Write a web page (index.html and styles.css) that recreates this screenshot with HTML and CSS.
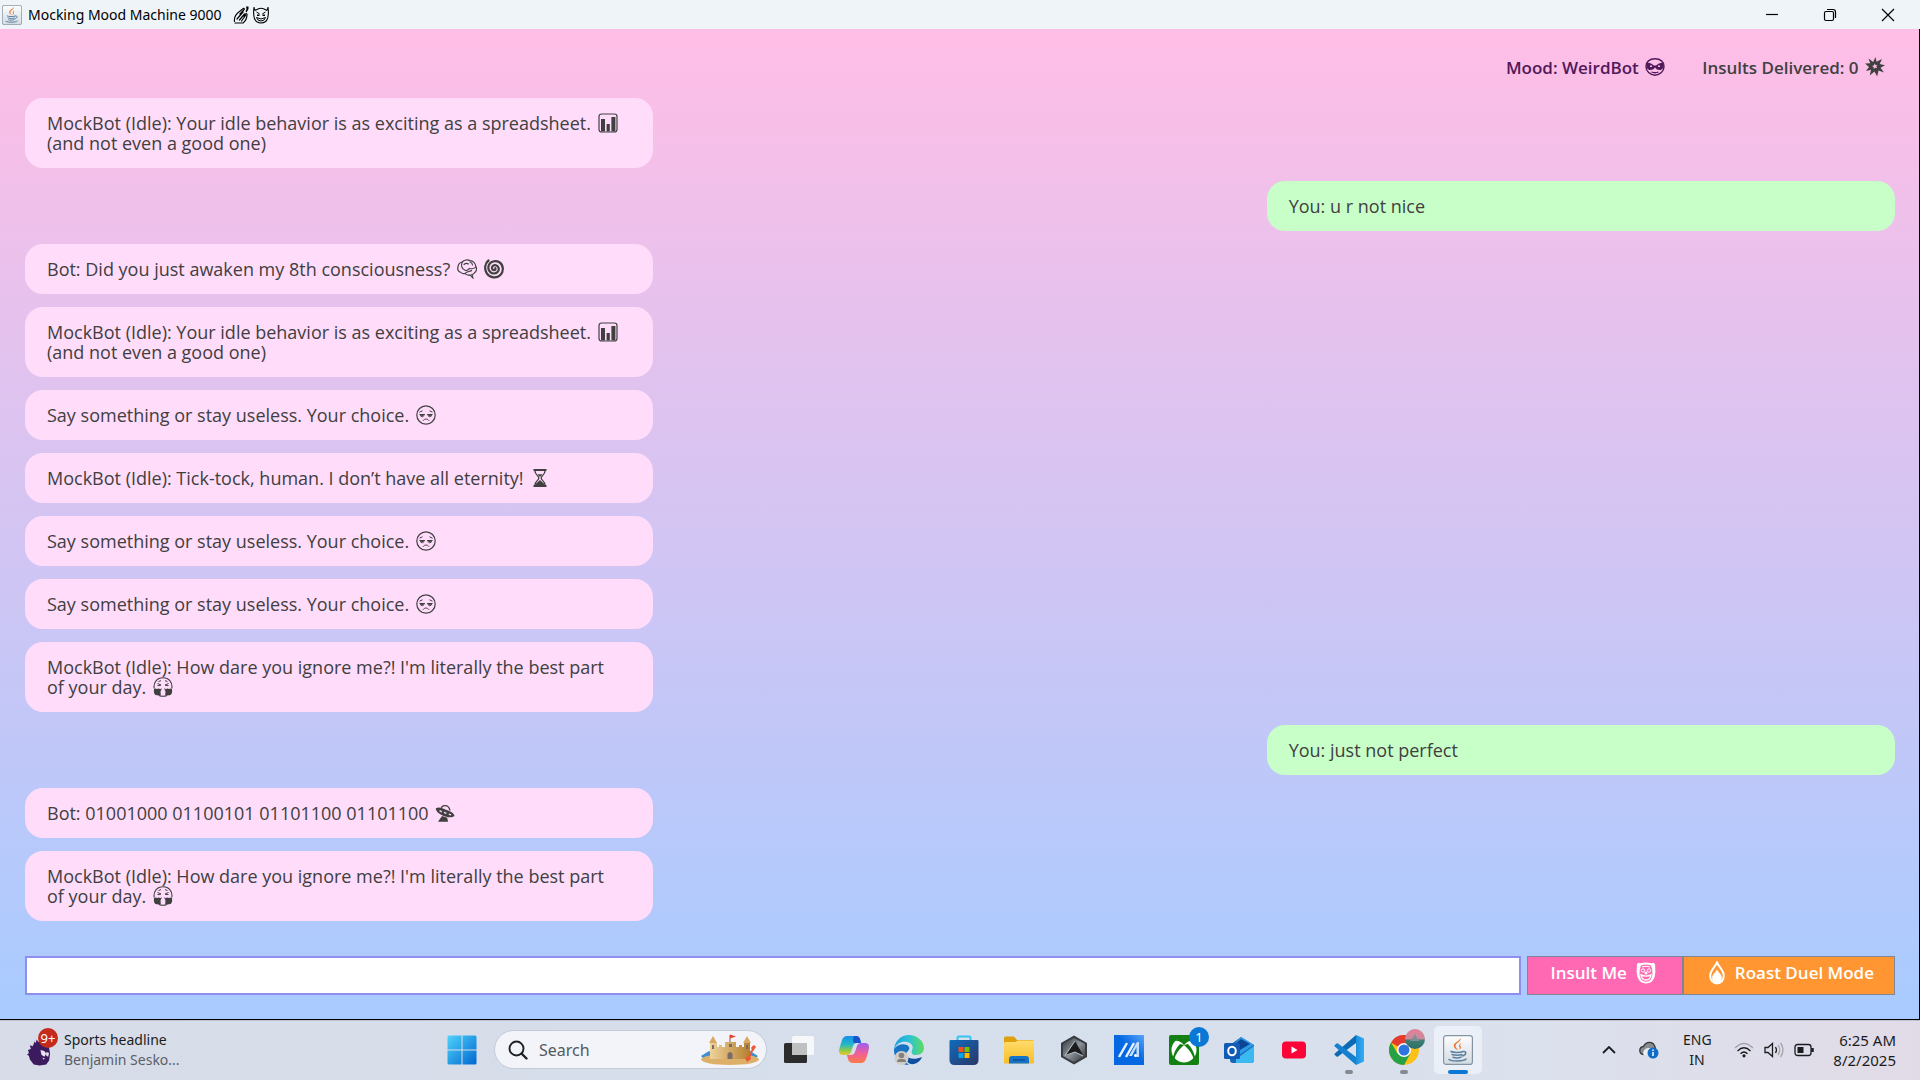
FILE: index.html
```
<!DOCTYPE html>
<html lang="en">
<head>
<meta charset="utf-8">
<title>Mocking Mood Machine 9000</title>
<link rel="stylesheet" href="styles.css">
</head>
<body>
<svg class="defs" aria-hidden="true">
  <defs>
    <linearGradient id="g-win" x1="0" y1="0" x2="1" y2="1"><stop offset="0" stop-color="#4fd3fb"/><stop offset="1" stop-color="#0067cf"/></linearGradient>
    <linearGradient id="g-cop1" x1="0" y1="0" x2="0" y2="1"><stop offset="0" stop-color="#1590e8"/><stop offset=".45" stop-color="#22b8c9"/><stop offset=".75" stop-color="#8ccb4a"/><stop offset="1" stop-color="#f0c52d"/></linearGradient>
    <linearGradient id="g-cop2" x1="0" y1="0" x2="0" y2="1"><stop offset="0" stop-color="#9a5ff0"/><stop offset=".5" stop-color="#ee5f9c"/><stop offset="1" stop-color="#fb7a45"/></linearGradient>
    <linearGradient id="g-edge" x1="0" y1="0" x2="1" y2="0"><stop offset="0" stop-color="#1b9fe0"/><stop offset=".5" stop-color="#2cc3d5"/><stop offset="1" stop-color="#5fdc5c"/></linearGradient>
    <linearGradient id="g-store" x1="0" y1="0" x2="1" y2="1"><stop offset="0" stop-color="#0f6cbd"/><stop offset="1" stop-color="#2b3566"/></linearGradient>
    <linearGradient id="g-fold" x1="0" y1="0" x2="0" y2="1"><stop offset="0" stop-color="#ffdc6b"/><stop offset="1" stop-color="#f9bd26"/></linearGradient>
    <linearGradient id="g-arm" x1="0" y1="0" x2="1" y2="1"><stop offset="0" stop-color="#33383d"/><stop offset=".5" stop-color="#8d959b"/><stop offset="1" stop-color="#2b2e31"/></linearGradient>
    <linearGradient id="g-asus" x1="0" y1="1" x2="1" y2="0"><stop offset=".55" stop-color="#0568e3"/><stop offset="1" stop-color="#58a5fb"/></linearGradient>
    <linearGradient id="g-sand" x1="0" y1="0" x2="1" y2="0"><stop offset="0" stop-color="#eed39b"/><stop offset="1" stop-color="#b5802f"/></linearGradient>
    <linearGradient id="g-java" x1="0" y1="0" x2="0" y2="1"><stop offset="0" stop-color="#fdfdfe"/><stop offset="1" stop-color="#d3dbe2"/></linearGradient>
    <linearGradient id="g-ava" x1="0" y1="0" x2="0" y2="1"><stop offset="0" stop-color="#e37f98"/><stop offset=".5" stop-color="#c98b9c"/><stop offset=".55" stop-color="#3f7f74"/><stop offset="1" stop-color="#2c6d66"/></linearGradient>
    <linearGradient id="g-vs" x1="0" y1="0" x2="1" y2="0"><stop offset="0" stop-color="#1c8fdc"/><stop offset="1" stop-color="#35adf3"/></linearGradient>

    <symbol id="chart" viewBox="0 0 20 20">
      <rect x="1" y="1" width="18" height="18" rx="2.500" fill="none" stroke="currentColor" stroke-width="1.200"/>
      <path d="M3 6h4v12.500H3zM8.600 11h3.200v7.500H8.600zM13.400 4h4v14.500h-4z" fill="currentColor"/>
    </symbol>
    <symbol id="brain" viewBox="0 0 20 20">
      <path d="M4 13.500C1.500 13 .3 10.800.9 8.500 1 5.500 3 3.500 5.200 3 7 .8 10.500.3 13 1.600c3 .2 5.500 2.700 5.700 5.600 1.500 2.200.8 5.300-1.200 6.600-1.200 1.200-2 1.800-2.500 1.700l.8 3.300-2.800-3c-2.500.6-4 0-5-1.300-1.500.3-3.200 0-4-1z" fill="none" stroke="currentColor" stroke-width="1.200"/>
      <path d="M5.200 3C3.800 6.500 4.800 10 8 11.200c2 .8 3.500-.5 4.500-1.800 2.500.8 4.200.4 6-1M7 5.500c1.500-1.500 3-1.500 4.500-.5M13 3c1.500.6 2.500 1.700 2.500 3M8 14.500c2-2.500 5-1.500 6.500-3" fill="none" stroke="currentColor" stroke-width="1.100" stroke-linecap="round"/>
    </symbol>
    <symbol id="swirl" viewBox="0 0 20 20">
      <path d="M4.500 1.500C.8 4.300.1 10.200 2.800 14.400c3 4.700 10 5.300 13.600 1.500 3.600-3.700 3.200-10-1-12.600-4-2.500-9.500-.8-10.700 3.200-1.200 4 1.200 7.800 4.800 8 3.400.2 5.700-2.400 5.200-5.300-.5-2.600-3.400-3.900-5.500-2.500-1.900 1.300-1.500 4.300.6 4.500 1.400.1 2-1 1.500-2" fill="none" stroke="currentColor" stroke-width="2.200" stroke-linecap="round"/>
    </symbol>
    <symbol id="unamused" viewBox="0 0 20 20">
      <circle cx="10" cy="10" r="9.200" fill="none" stroke="currentColor" stroke-width="1.200"/>
      <path d="M3.500 7.200 6.500 5.800M16.500 7.200l-3-1.400M3.500 9.500h5.300M11.200 9.500h5.300M7 15.700c1.500-2.200 4.500-2.200 6 0" fill="none" stroke="currentColor" stroke-width="1"/>
      <path d="M4.200 9.500q.2 2.300 2 2.300t2-2.300zM11.800 9.500q.2 2.300 2 2.300t2-2.300z" fill="none" stroke="currentColor" stroke-width=".9"/>
      <path d="M5.200 9.500h2v1.500h-2zM12.800 9.500h2v1.500h-2z" fill="currentColor"/>
    </symbol>
    <symbol id="hourglass" viewBox="0 0 20 20">
      <path d="M3.500 1h13v2h-13zM3.500 17h13v2h-13z" fill="currentColor"/>
      <path d="M5 3c0 4 3.800 4.500 3.800 7S5 13 5 17M15 3c0 4-3.800 4.500-3.800 7S15 13 15 17" fill="none" stroke="currentColor" stroke-width="1.300"/>
      <path d="M7.500 6.200h5L10 9zM5.500 17c.3-2.300 3-3 4.500-5 1.500 2 4.200 2.700 4.500 5z" fill="currentColor"/>
    </symbol>
    <symbol id="steam" viewBox="0 0 20 20">
      <path d="M1.200 11.500C.2 5.500 4 .8 10 .8s9.800 4.700 8.800 10.700M6 18.400q4 1.600 8 0" fill="none" stroke="currentColor" stroke-width="1.100"/>
      <path d="M5.500 4.600 8 3.600M14.500 4.600 12 3.600M4.500 6.500 8 8q-2 1-3.500.5M15.500 6.500 12 8q2 1 3.500.5" fill="none" stroke="currentColor" stroke-width="1"/>
      <path d="M1 12q1.500-1.200 3 0 1.800-1 3.300.2L8.500 11v1.500l-1 2 .3 3.300q-1.600 1.400-3.300.4-2 .3-3-1.200-1-2.500-.5-5zM19 12q-1.500-1.200-3 0-1.800-1-3.300.2L11.500 11v1.500l1 2-.3 3.300q1.600 1.400 3.300.4 2 .3 3-1.200 1-2.500.5-5z" fill="currentColor"/>
    </symbol>
    <symbol id="ufo" viewBox="0 0 20 20">
      <path d="M6 6.500C6.500 1.500 13.500.8 15 7.500" fill="none" stroke="currentColor" stroke-width="1.300"/>
      <path d="M.8 5.200C4 3.800 7 5 11.500 7c4.500 1.600 7.500 3 8 6-3 2.300-8 1.200-12-.6C3.800 10.700 1 8.700.8 5.200z" fill="currentColor"/>
      <path d="M4.500 7.600l2.400 1.200M9 9.300l2.400 1M13.800 11.200l2.300.6" stroke="#ffdcfa" stroke-width="1.300"/>
      <path d="M7 13l5.300 1.700.7 4H3z" fill="currentColor"/>
    </symbol>
    <symbol id="alien" viewBox="0 0 20 18">
      <path d="M10 .8C4.500.8 1 3.800 1 8.500c0 4.700 4 8.700 9 8.700s9-4 9-8.700C19 3.800 15.500.8 10 .8z" fill="none" stroke="currentColor" stroke-width="1.400"/>
      <path d="M1.500 5q4-.8 7.500 2.500h2Q14.500 4.200 18.500 5q.8 5.500-2.700 7-4 .5-5.800-2.500-1.800 3-5.800 2.500Q.7 10.500 1.500 5z" fill="currentColor"/>
      <path d="M6.500 14q3.500 1.500 7 0" fill="none" stroke="currentColor" stroke-width="1.300"/>
      <path d="M5 8.300h2M13 8.300h2" stroke="#fbbde6" stroke-width="1.500"/>
    </symbol>
    <symbol id="burst" viewBox="0 0 20 20">
      <path d="M3.500 1.500l4.700 3.500L10.500 0l1 4.700L17 2l-2.300 5 5.300 1.300-4.500 2.500 3.500 4.700-5.500-2-1.300 6-2.700-5-4.800 4 1.400-5.700L1 14l3-4-4-3.500 5.200-.2z" fill="currentColor"/>
      <path d="M9.800 6.500l.8 1.700 1.900-.2-1.200 1.500.8 1.700-1.900-.5-1.500 1.200v-1.900L7 9l1.800-.6z" fill="#fbbde6"/>
    </symbol>
    <symbol id="clown" viewBox="0 0 20 22">
      <path fill-rule="evenodd" d="M2 .8q2 .6 3.500.2 4.500-1 9 0 1.500.4 3.500-.2 1.800 2 1.200 5.200.6 4-.5 8.500Q16.500 21.500 10 21.500T1.300 14.500Q.2 10 .8 6 .2 2.800 2 .8zM5 3.500Q3.200 7 3.500 12q.8 7.800 6.500 7.800T16.500 12q.3-5-1.500-8.500-5-1.800-10 0z" fill="currentColor"/>
      <path d="M6 5q4-1.500 8 0" fill="none" stroke="currentColor" stroke-width="1.200"/>
      <circle cx="7" cy="8.500" r="1.700" fill="none" stroke="currentColor"/>
      <circle cx="13" cy="8.500" r="1.700" fill="none" stroke="currentColor"/>
      <circle cx="10" cy="11" r="1.500" fill="currentColor"/>
      <path d="M5 13q5 2.200 10 0-.8 5-5 5t-5-5z" fill="none" stroke="currentColor" stroke-width="1.400"/>
    </symbol>
    <symbol id="flame" viewBox="0 0 18 24">
      <path d="M9 1.500c2 4.500 6.800 8 6.800 13.300 0 4.700-3 7.700-6.800 7.700s-6.800-3-6.800-7.700C2.200 9.500 7 6 9 1.500z" fill="none" stroke="currentColor" stroke-width="2"/>
      <path d="M9 8.500c1.200 3 4.900 4.700 4.900 8.500 0 3-2.200 5-4.900 5s-4.900-2-4.900-5c0-3.800 3.700-5.500 4.900-8.500z" fill="currentColor"/>
    </symbol>
    <symbol id="polish" viewBox="0 0 16 18">
      <path d="M1.500 15.500C.8 11 3 8 6.500 5.500l4-3.200c1 .1 1 1 .3 1.700L7 8M2 17h8c2.500-2 4-5.500 4-8.500 0-1-1.500-1.200-2 .3l-1 2.200M4 13l6-7M6.500 14l5-6M8.500 15l4-5.500" fill="none" stroke="currentColor" stroke-width="1.200" stroke-linecap="round"/>
      <path d="M13 .5h2.500v2.500l-2 3.500-1-1 1-2.500z" fill="currentColor"/>
    </symbol>
    <symbol id="imp" viewBox="0 0 16 18">
      <path d="M1 1c0 2 .5 3 2 3.500M15 1c0 2-.5 3-2 3.500M1 1.500C.3 6 .5 9 1.300 12c1 3.300 3.700 5 6.700 5s5.700-1.700 6.700-5c.8-3 1-6 .3-10.500M3 4Q8 .5 13 4" fill="none" stroke="currentColor" stroke-width="1.100"/>
      <path d="M3.500 6l3.200 2M12.500 6 9.300 8M3.500 11.500q4.500 3 9 0-1 3.500-4.500 3.500t-4.500-3.500" fill="none" stroke="currentColor" stroke-width="1"/>
      <path d="M4 8.500h2.500V10H4zM9.500 8.500H12V10H9.500z" fill="currentColor"/>
    </symbol>
    <symbol id="java" viewBox="0 0 30 30">
      <rect x=".6" y=".6" width="28.800" height="28.800" rx="2.500" fill="url(#g-java)" stroke="#8494a3" stroke-width="1.200"/>
      <path d="M17.500 3c1.500 3.500-5.500 5-5 8.200.2 1.600 1.700 2.700 2.500 4-3-1.400-5-3.200-4-5.700 1-2.300 5.800-3.500 6.500-6.500zM19 8c-2.500 1-3.500 2.200-2.700 3.700.6 1.100.7 2-.5 3.300 3.300-2 2-3.300 1.500-4.300C17 9.800 17.500 9 19 8z" fill="#e7732c"/>
      <path d="M8 16.500c2 1.200 9 1.200 11.500.2M9 19.500c2.500 1 7.500 1 9.800 0M10 22.300c2 .7 5.700.7 7.800 0M19.800 16.500c4-.7 4 3-.5 4.500M6 24.500c3 2 14.500 2 17-.5" fill="none" stroke="#5b7f9d" stroke-width="1.500" stroke-linecap="round"/>
    </symbol>
  </defs>
</svg>

<header class="titlebar">
  <svg class="titlebar-logo"><use href="#java"/></svg>
  <h1 class="titlebar-text">Mocking Mood Machine 9000</h1>
  <svg class="titlebar-emoji"><use href="#polish"/></svg>
  <svg class="titlebar-emoji"><use href="#imp"/></svg>
  <div class="window-controls">
    <button class="window-button" aria-label="Minimize"><svg viewBox="0 0 14 14"><path d="M1 6.500h12"/></svg></button>
    <button class="window-button" aria-label="Restore"><svg viewBox="0 0 14 14"><rect x="1.500" y="3.500" width="9" height="9" rx="1.500"/><path d="M4 1.500h6q2.500 0 2.500 2.500v6"/></svg></button>
    <button class="window-button" aria-label="Close"><svg viewBox="0 0 14 14"><path d="M1 1l12 12M13 1 1 13"/></svg></button>
  </div>
</header>

<main class="app">
  <div class="status">
    <p class="status-mood">Mood: WeirdBot <svg class="emoji"><use href="#alien"/></svg></p>
    <p class="status-count">Insults Delivered: 0 <svg class="emoji"><use href="#burst"/></svg></p>
  </div>

  <ul class="chat">
    <li class="bubble">MockBot (Idle): Your idle behavior is as exciting as a spreadsheet. <svg class="emoji"><use href="#chart"/></svg><br>(and not even a good one)</li>
    <li class="bubble bubble-user">You: u r not nice</li>
    <li class="bubble">Bot: Did you just awaken my 8th consciousness? <svg class="emoji"><use href="#brain"/></svg> <svg class="emoji"><use href="#swirl"/></svg></li>
    <li class="bubble">MockBot (Idle): Your idle behavior is as exciting as a spreadsheet. <svg class="emoji"><use href="#chart"/></svg><br>(and not even a good one)</li>
    <li class="bubble">Say something or stay useless. Your choice. <svg class="emoji"><use href="#unamused"/></svg></li>
    <li class="bubble">MockBot (Idle): Tick-tock, human. I don’t have all eternity! <svg class="emoji"><use href="#hourglass"/></svg></li>
    <li class="bubble">Say something or stay useless. Your choice. <svg class="emoji"><use href="#unamused"/></svg></li>
    <li class="bubble">Say something or stay useless. Your choice. <svg class="emoji"><use href="#unamused"/></svg></li>
    <li class="bubble">MockBot (Idle): How dare you ignore me?! I'm literally the best part<br>of your day. <svg class="emoji"><use href="#steam"/></svg></li>
    <li class="bubble bubble-user">You: just not perfect</li>
    <li class="bubble">Bot: 01001000 01100101 01101100 01101100 <svg class="emoji"><use href="#ufo"/></svg></li>
    <li class="bubble">MockBot (Idle): How dare you ignore me?! I'm literally the best part<br>of your day. <svg class="emoji"><use href="#steam"/></svg></li>
  </ul>

  <form class="composer">
    <input class="composer-input" type="text" aria-label="Message">
    <button class="composer-button insult" type="button">Insult Me <svg class="clown"><use href="#clown"/></svg></button><button class="composer-button duel" type="button"><svg class="flame"><use href="#flame"/></svg> Roast Duel Mode</button>
  </form>
</main>

<footer class="taskbar">
  <a class="widget" href="#">
    <span class="widget-icon">
      <svg viewBox="0 0 26 32"><path d="M8 7l1 2 1-4 2 3 3-4 1 4 5 1 2 5 1 6-1 7-3 4-7 1-6-1-4-5-1-4-2-1 2-2-1-3 3-1-1-4 3 1z" fill="#3b1a5e"/><path d="M14 16l4 1 2 3-2 3-3-2zM20 18l3 1-1 4-2-1zM16 24l3 1-2 1z" fill="#e9e4f3"/></svg>
      <span class="badge">9+</span>
    </span>
    <span class="widget-text"><span>Sports headline</span><span class="widget-sub">Benjamin Sesko...</span></span>
  </a>

  <nav class="apps" aria-label="Taskbar">
    <button class="app-button" aria-label="Start"><svg class="icon" viewBox="0 0 30 30"><path d="M2 .5h12.500v14H.5V2Q.5.500 2 .5zM15.500.5H28q1.500 0 1.500 1.500v12.500h-14zM.5 15.500h14v14H2Q.5 29.500.5 28zM15.500 15.500h14V28q0 1.500-1.500 1.500H15.500z" fill="url(#g-win)"/></svg></button>
    <label class="search">
      <svg class="search-icon" viewBox="0 0 20 20"><circle cx="8.500" cy="8.500" r="7" fill="none" stroke="#1d2226" stroke-width="1.900"/><path d="M13.500 13.500l5 5" stroke="#1d2226" stroke-width="2.400" stroke-linecap="round"/></svg>
      <input class="search-input" type="text" placeholder="Search" aria-label="Search">
      <svg class="castle" viewBox="0 0 60 32">
        <path d="M1 22l8-5 5 3 30 1 6-4 8 5-3 3H4z" fill="#3c8fd0"/>
        <ellipse cx="30" cy="25.500" rx="29" ry="5.500" fill="#dcb068"/>
        <path d="M10 9h7v4h2v-2h3v2h3V8h11v5h3v-2h3v2h2V9h6v16H10z" fill="url(#g-sand)"/>
        <path d="M9 9l4-7 4 7zM43 9l4-7 4 7z" fill="#d9a860"/>
        <path d="M12 11h2v4h-2zM46 11h2v4h-2zM27.500 25v-5q2.500-4 5 0v5zM29 10h3v3h-3z" fill="#7d6a6a"/>
        <path d="M30 8V1" stroke="#8a5a35"/><path d="M30 .5l6 2-6 2z" fill="#e8432b"/>
        <path d="M54 13l-6 12" stroke="#ee5533" stroke-width="1.800"/><path d="M51 14q3-5 5-1l-3 4zM45 24l5-2 1 3-4 3z" fill="#ee5533"/>
      </svg>
    </label>
    <button class="app-button" aria-label="Task view"><svg class="icon" viewBox="0 0 30 30"><rect x="0" y="8" width="23" height="20" rx="1.500" fill="#2c2c2c"/><rect x="8" y="1" width="22" height="19" rx="1.500" fill="#f8f8f8" opacity=".92"/><path d="M8 8h15v12H8z" fill="#bfc0c0"/></svg></button>
    <button class="app-button" aria-label="Copilot"><svg class="icon" viewBox="0 0 30 30"><path d="M8 1h9q3 0 4 3l1 4h-4q-3 0-4 3l-2 6q-1 3-4 3H4q-4 0-4-4Q0 14 3 5 4.500 1 8 1z" fill="url(#g-cop1)"/><path d="M15 1h2q3 0 4 3l1 4h-7q-2-3 0-7z" fill="#1b52cf"/><path d="M22 28h-8q-4 0-5-4l-1-4h4q3 0 4-3l2-6q1-3 4-3h4q4 0 4 4 0 3-3 12-1.500 4-5 4z" fill="url(#g-cop2)"/></svg></button>
    <button class="app-button" aria-label="Edge"><svg class="icon" viewBox="0 0 30 30"><path d="M15 0C7 0 1 6 0 14c3-6 8-8 13-7 5 1 7 5 5 8-1 3 0 5 4 5 5 0 8-3 8-7C30 6 23 0 15 0z" fill="url(#g-edge)"/><path d="M0 14c-.5 9 6 16 15 16-5-3-6-10-1-14 2-2 2-4-1-6-5-2-10 0-13 4z" fill="#1773c4"/><path d="M11 20c0 6 4 10 9 9 4-1 7-4 8-7-7 3-14 2-17-2z" fill="#0e4fa0"/><circle cx="7.500" cy="23" r="7" fill="#d2cdc8"/><circle cx="7.500" cy="20.500" r="2.800" fill="#84807c"/><path d="M3 27q0-3 3-3h3q3 0 3 3z" fill="#84807c"/></svg></button>
    <button class="app-button" aria-label="Microsoft Store"><svg class="icon" viewBox="0 0 30 30"><path d="M8.500 6V3q0-1.500 1.500-1.500h10q1.500 0 1.500 1.500v3" fill="none" stroke="#35c3f3" stroke-width="2"/><path d="M1.500 5h27q1 0 1 1v19q0 5-5 5h-19q-5 0-5-5V6q0-1 1-1z" fill="url(#g-store)"/><path d="M9.500 12h5v5h-5z" fill="#f25022"/><path d="M15.500 12h5v5h-5z" fill="#7fba00"/><path d="M9.500 18h5v5h-5z" fill="#00a4ef"/><path d="M15.500 18h5v5h-5z" fill="#ffb900"/></svg></button>
    <button class="app-button" aria-label="File Explorer"><svg class="icon" viewBox="0 0 30 30"><path d="M0 3q0-1.500 1.500-1.500H10L13 5h15.500Q30 5 30 6.500V12H0z" fill="#dfa00f"/><path d="M0 8.500Q0 7 1.500 7H11l3-1.500h16v22q0 1-1 1H1q-1 0-1-1z" fill="url(#g-fold)"/><path d="M5 28.500V24q0-3 3-3h14q3 0 3 3v4.500z" fill="#1474cc"/><path d="M9 25h12" stroke="#0d4f92" stroke-width="1.500"/></svg></button>
    <button class="app-button" aria-label="Armoury Crate"><svg class="icon" viewBox="0 0 30 30"><path d="M15 .5 28 8v14l-13 7.500L2 22V8z" fill="#383c40"/><path d="M15 3 26 9v12l-11 6-11-6V9z" fill="url(#g-arm)"/><path d="M16 6 24 20l-8-3-10 4z" fill="#1a1c1e"/><path d="M16 6 6 20.500 16 17l8 4" fill="none" stroke="#b9c1c7"/></svg></button>
    <button class="app-button" aria-label="MyASUS"><svg class="icon" viewBox="0 0 30 30"><path d="M0 0h30v30H0z" fill="url(#g-asus)"/><path d="M5 22 13 8M12 22 20 8" stroke="#e6f1ff" stroke-width="2.500"/><path d="M15 21 23 7h2v15h-2.500V12l-4.500 9z" fill="#c4defc"/><circle cx="21.500" cy="20.500" r="1.500" fill="#fff"/></svg></button>
    <button class="app-button" aria-label="Xbox"><svg class="icon" viewBox="0 0 30 30"><rect width="30" height="30" rx="2" fill="#128012"/><circle cx="15" cy="15" r="12.500" fill="#fff"/><path d="M6 6q4-1 9 4 5-5 9-4-3-4-9-4T6 6zM15 10q-8 7-9.500 14L4 22q2-8 7-13zM15 10q8 7 9.500 14l1.500-2q-2-8-7-13z" fill="#128012"/></svg><span class="badge badge-blue">1</span></button>
    <button class="app-button" aria-label="Outlook"><svg class="icon" viewBox="0 0 30 30"><path d="M6 10 17 2l13 8v15q0 3-3 3H9q-3 0-3-3z" fill="#1a66b8"/><path d="M11 8 17 2l13 8-18 12z" fill="#2f9be8"/><path d="M17 4l9 5-15 9V9z" fill="#0d4596"/><path d="M12 24 30 11v14q0 3-3 3H12z" fill="#3bb9f0"/><rect y="8" width="16" height="16" rx="1.500" fill="#0f5bb5"/><ellipse cx="8" cy="16" rx="3.800" ry="4.300" fill="none" stroke="#fff" stroke-width="2"/></svg></button>
    <button class="app-button" aria-label="YouTube"><svg class="icon" viewBox="0 0 30 30"><rect x="3" y="6.500" width="24" height="17" rx="4" fill="#fb0437"/><path d="M12.500 11.500v7l6-3.500z" fill="#fff"/></svg></button>
    <button class="app-button running" aria-label="Visual Studio Code"><svg class="icon" viewBox="0 0 30 30"><path d="M22 0v8L4 21.500q-.8.500-1.500 0L.8 20q-.8-.8 0-1.600z" fill="#0b6bb5"/><path d="M22 30v-8L4 8.500q-.8-.5-1.500 0L.8 10q-.8.8 0 1.600z" fill="#1580cf"/><path d="M22 0 30 3.500v23L22 30z" fill="url(#g-vs)"/></svg></button>
    <button class="app-button running" aria-label="Chrome"><svg class="icon" viewBox="0 0 30 30"><circle cx="15" cy="15" r="15" fill="#fbc116"/><path d="M15 15 2 7.500A15 15 0 0 1 28 7.500z" fill="#e33b2e"/><path d="M2 7.500A15 15 0 0 0 15 30l6.500-11.500H8.500z" fill="#28a046"/><circle cx="15" cy="15" r="7" fill="#fff"/><circle cx="15" cy="15" r="5.500" fill="#2f73e0"/></svg><svg class="avatar" viewBox="0 0 20 20"><circle cx="10" cy="10" r="10" fill="url(#g-ava)"/><path d="M5 12l4-5 1-2 2 4 3 3z" fill="#7d8f95"/></svg></button>
    <button class="app-button running active" aria-label="Java"><svg class="icon"><use href="#java"/></svg></button>
  </nav>

  <div class="tray">
    <svg class="chevron" viewBox="0 0 14 8"><path d="M1 7l6-6 6 6"/></svg>
    <svg class="cloud" viewBox="0 0 20 18"><path d="M4.500 13.500Q.8 13 .8 9.500.8 6 4.500 5.500 6.500 1 11 1.300q4 .5 5 4.700l1 4" fill="#8a8d90" stroke="#33373a" stroke-width="1.300"/><path d="M4 12q1-5 6-5t7 4l-4 3H5z" fill="#eceef0"/><circle cx="14" cy="12" r="5.500" fill="#0f6cc9"/><path d="M14 11v4M14 8.500v1.500" stroke="#fff" stroke-width="1.500"/></svg>
    <p class="language">ENG<br>IN</p>
    <div class="status-icons">
      <svg viewBox="0 0 20 16"><path d="M1 6q9-9 18 0" opacity=".3"/><path d="M3.500 9q6.500-6.500 13 0M6.500 11.800q3.500-3.500 7 0"/><circle cx="10" cy="13.800" r="1.600" fill="#1a1d20" stroke="none"/></svg>
      <svg viewBox="0 0 20 16"><path d="M1 5.500h3L8.500 1.500v13L4 10.500H1zM11.500 5q2 3 0 6"/><path d="M14 3q3.500 5 0 10M16.500 1q5 7 0 14" opacity=".3"/></svg>
      <svg viewBox="0 0 20 16"><rect x="1" y="2.500" width="16" height="11" rx="2.500"/><path d="M3.500 5h6v6h-6z" fill="#1a1d20" stroke="none"/><path d="M18.500 6v4" stroke-width="2.500"/></svg>
    </div>
    <p class="clock">6:25 AM<br>8/2/2025</p>
  </div>
</footer>
</body>
</html>
```
FILE: styles.css
```
* { box-sizing: border-box; }

body {
  margin: 0;
  min-height: 100vh;
  display: flex;
  flex-direction: column;
  font-family: "Open Sans", "Noto Sans", sans-serif;
  color: #404040;
}

h1, p, ul { margin: 0; padding: 0; }
button { font: inherit; padding: 0; border: 0; background: none; }
svg { flex: none; }

.defs { position: absolute; width: 0; height: 0; }

/* Title bar */
.titlebar {
  display: flex;
  align-items: center;
  height: 29px;
  padding-left: 2px;
  background: #eff4f9;
  color: #000;
}
.titlebar-logo { width: 20px; height: 20px; margin-right: 6px; }
.titlebar-text { margin-right: 11px; font: 400 14px/20px "Noto Sans", sans-serif; }
.titlebar-emoji { width: 16px; height: 18px; margin-right: 4px; }
.window-controls { display: flex; margin-left: auto; padding-right: 3px; }
.window-button { display: grid; place-items: center; width: 58px; height: 29px; }
.window-button svg { width: 14px; height: 14px; fill: none; stroke: #000; stroke-width: 1.2; }

/* Application window */
.app {
  flex: 1;
  display: flex;
  flex-direction: column;
  padding: 0 24px 24px 25px;
  border-right: 1px solid #000;
  border-bottom: 1px solid #000;
  background: linear-gradient(#ffbee6, #a8cbff);
}

.emoji { width: 20px; height: 20px; margin-left: 2px; vertical-align: -3px; }

.status {
  display: flex;
  justify-content: flex-end;
  gap: 37px;
  padding: 27px 10px 18px 0;
  font-size: 17px;
  font-weight: 600;
  line-height: 24px;
}
.status-mood { color: #50195a; }

.chat { display: flex; flex-direction: column; gap: 13px; list-style: none; }
.bubble {
  width: 33.6%;
  padding: 15px 22px;
  border-radius: 18px;
  background: #ffdcfa;
  font-size: 18px;
  line-height: 20px;
  white-space: nowrap;
}
.bubble-user { align-self: flex-end; background: #c8ffc8; }

.composer { display: flex; height: 39px; margin-top: auto; }
.composer-input {
  flex: 1;
  min-width: 0;
  margin-right: 6px;
  padding: 0 8px;
  border: 2px solid #8e8ef0;
  background: #fff;
  font: inherit;
  font-size: 18px;
  outline: 0;
}
.composer-button {
  display: flex;
  align-items: center;
  gap: 9px;
  padding-bottom: 6px;
  border: 1px solid #7f8795;
  color: #fff;
  font-size: 17px;
  font-weight: 600;
}
.insult { padding-left: 22px; padding-right: 26px; background: #ff69b4; }
.duel { padding-left: 24px; padding-right: 20px; background: #ff9632; }
.clown { width: 20px; height: 22px; }
.flame { width: 18px; height: 24px; }

/* Taskbar */
.taskbar {
  display: grid;
  grid-template-columns: 1fr auto 1fr;
  align-items: center;
  height: 60px;
  padding-bottom: 2px;
  border-top: 1px solid #bfc3cd;
  background: linear-gradient(90deg, #d7dce8, #d6dfec 55%, #dbe1ed 80%, #e1dbe7);
  color: #1a1d20;
  font-family: "Noto Sans", sans-serif;
  font-size: 14px;
  line-height: 20px;
}

.widget { display: flex; align-items: center; gap: 12px; padding-left: 27px; color: inherit; text-decoration: none; }
.widget-icon { position: relative; display: flex; }
.widget-icon svg { width: 25px; height: 32px; }
.widget-text { display: flex; flex-direction: column; }
.widget-sub { color: #5b5f66; }

.badge {
  position: absolute;
  top: -6px;
  left: 11px;
  width: 20px;
  height: 20px;
  border-radius: 10px;
  background: #c42b1c;
  color: #fff;
  font-size: 13px;
  text-align: center;
}
.badge-blue { top: 1px; left: 33px; background: #0a78d4; }

.apps { display: flex; align-items: center; }
.app-button { position: relative; display: grid; place-items: center; width: 55px; height: 48px; }
.icon { width: 30px; height: 30px; }
.avatar { position: absolute; top: 3px; left: 29px; width: 20px; height: 20px; }
.running::after {
  content: "";
  position: absolute;
  bottom: 0;
  left: 24px;
  width: 8px;
  height: 4px;
  border-radius: 2px;
  background: #858a90;
}
.active { width: 48px; margin: 0 4px 0 3px; border-radius: 5px; background: #ebeff7; }
.active::after { left: 14px; width: 20px; background: #0a78d4; }

.search {
  display: flex;
  align-items: center;
  width: 273px;
  height: 39px;
  margin: 0 4px 0 5px;
  padding: 0 6px 0 13px;
  border: 1px solid #c3cad8;
  border-radius: 20px;
  background: #f2f4f9;
}
.search-icon { width: 20px; height: 20px; margin-right: 10px; }
.search-input {
  flex: 1;
  min-width: 0;
  padding: 0 1px;
  border: 0;
  background: none;
  font: inherit;
  font-size: 16px;
  outline: 0;
}
.search-input::placeholder { color: #55595e; opacity: 1; }
.castle { width: 60px; height: 32px; }

.tray { display: flex; justify-content: flex-end; align-items: center; padding-right: 24px; }
.chevron { width: 14px; height: 8px; margin-right: 23px; fill: none; stroke: #1a1d20; stroke-width: 1.8; }
.cloud { width: 20px; height: 18px; margin-right: 24px; }
.language { width: 28px; text-align: center; }
.status-icons { display: flex; gap: 10px; margin: 0 18px 0 23px; }
.status-icons svg { width: 20px; height: 16px; fill: none; stroke: #1a1d20; stroke-width: 1.3; }
.clock { width: 64px; font-size: 15px; text-align: right; }
```
